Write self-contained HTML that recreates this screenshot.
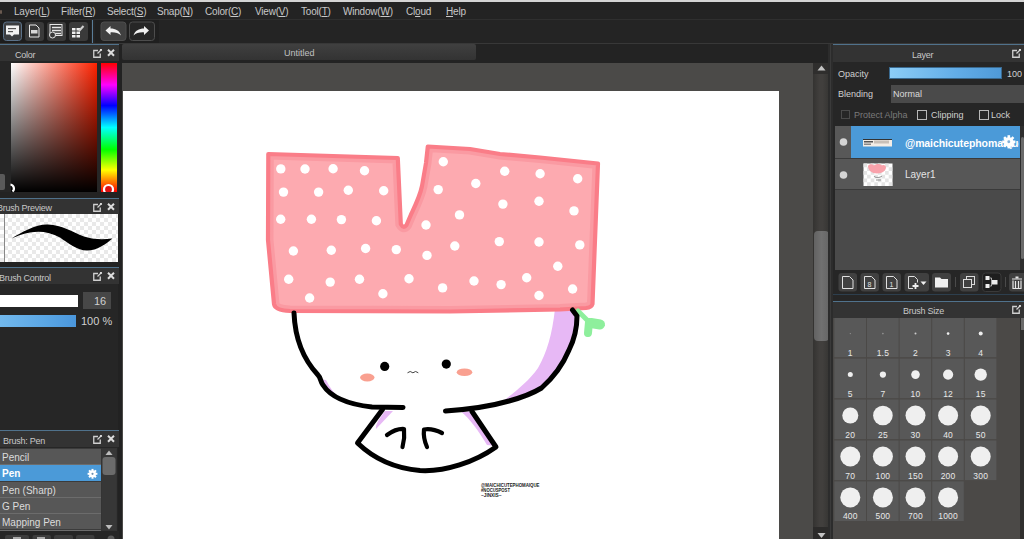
<!DOCTYPE html>
<html><head><meta charset="utf-8">
<style>
*{margin:0;padding:0;box-sizing:border-box}
html,body{width:1024px;height:539px;overflow:hidden;background:#242424;font-family:"Liberation Sans",sans-serif;color:#d6d6d6}
.a{position:absolute}
.t{position:absolute;white-space:nowrap;line-height:1}
/* top */
#topstrip{left:0;top:0;width:1024px;height:2px;background:#d4d4d4}
#menubar{left:0;top:2px;width:1024px;height:17px;background:#232323}
.mi{position:absolute;top:6px;font-size:10px;color:#c8c8c8;letter-spacing:-0.2px}
#toolbar{left:0;top:19px;width:1024px;height:25px;background:#242424;border-top:1px solid #2f2f2f;border-bottom:1px solid #383838}
.tb{position:absolute;top:22px;width:19px;height:19px;background:#3a3a3a;border-radius:3px}
/* canvas */
#tabbar{left:122px;top:44px;width:711px;height:19px;background:#232323}
#tab{left:122px;top:44px;width:354px;height:16px;background:linear-gradient(#404040,#333333);border-radius:2px}
#cv{left:122px;top:63px;width:692px;height:476px;background:#4b4a48}
#paper{left:123px;top:91px;width:656px;height:448px;background:#ffffff}
#vscroll{left:813px;top:63px;width:16px;height:476px;background:linear-gradient(to right,#343331,#413f3d 40%,#413f3d 60%,#363533)}
#thumb{left:813.5px;top:231px;width:15.5px;height:110px;background:linear-gradient(to right,#626262,#717171 50%,#666);border-radius:4px}
/* left panel */
#lp{left:0;top:44px;width:122px;height:495px;background:#262626}
.hdr{position:absolute;height:17px;background:#333333;border-top:1.5px solid #50728c}
.ht{position:absolute;top:5px;font-size:9px;color:#c8c8c8;letter-spacing:-0.25px;white-space:nowrap}
.row{left:0;width:101px;height:15px;background:#575757;font-size:10px;color:#dcdcdc;padding:4px 0 0 2px;line-height:1}
.sel{background:#4b9ad8;color:#fff;font-weight:bold;height:16px}
/* right panel */
#rp{left:831px;top:44px;width:193px;height:495px;background:#262626}
</style></head><body>
<div id="topstrip" class="a"></div>
<div id="menubar" class="a"></div>
<div class="a" style="left:0;top:10px;width:2px;height:4px;background:#6a5a50;border-radius:1px"></div>
<div class="mi" style="left:14px">Layer(<u>L</u>)</div>
<div class="mi" style="left:61px">Filter(<u>R</u>)</div>
<div class="mi" style="left:107px">Select(<u>S</u>)</div>
<div class="mi" style="left:157px">Snap(<u>N</u>)</div>
<div class="mi" style="left:205px">Color(<u>C</u>)</div>
<div class="mi" style="left:255px">View(<u>V</u>)</div>
<div class="mi" style="left:301px">Tool(<u>T</u>)</div>
<div class="mi" style="left:343px">Window(<u>W</u>)</div>
<div class="mi" style="left:406px">Cl<u>o</u>ud</div>
<div class="mi" style="left:446px"><u>H</u>elp</div>
<div id="toolbar" class="a"></div>
<div class="a" style="left:0;top:20px;width:91px;height:23px;background:#1d1d1d"></div>
<div class="a" style="left:92px;top:20px;width:1px;height:23px;background:#5a7d98"></div>
<div class="a" style="left:95px;top:20px;width:64px;height:23px;background:#1f1f1f"></div>
<svg class="a" style="left:0;top:18px" width="160" height="28" viewBox="0 18 160 28">
 <rect x="3.5" y="22" width="18" height="18.5" rx="3" fill="#3b3d40" stroke="#5b7188" stroke-width="1"/>
 <path d="M6,25.5 h13 v9 h-5 l-2,2 l-2,-2 h-4 z" fill="#f2f2f2"/>
 <rect x="8" y="28" width="8" height="1.2" fill="#555"/><rect x="8" y="31" width="5" height="1.2" fill="#555"/>
 <rect x="25" y="22" width="19" height="19" rx="3" fill="#3a3a3a"/>
 <path d="M29.5,25 h6.5 l3,3 v9 h-9.5 z" fill="none" stroke="#e8e8e8" stroke-width="1"/>
 <rect x="31" y="30" width="6.5" height="3.5" fill="#d8d8d8"/>
 <rect x="47" y="22" width="19" height="19" rx="3" fill="#3a3a3a"/>
 <rect x="50" y="24.5" width="12" height="11" fill="none" stroke="#e6e6e6" stroke-width="1"/>
 <path d="M52,27.5h9M52,30.5h9M55,33.5h6" stroke="#e6e6e6" stroke-width="1.3"/>
 <circle cx="52.5" cy="35" r="3" fill="#3a3a3a" stroke="#e6e6e6" stroke-width="1"/>
 <rect x="69" y="22" width="19" height="19" rx="3" fill="#3a3a3a"/>
 <path d="M72,28h3.5v2.5h-3.5zM76.5,28h3.5v2.5h-3.5zM72,31.5h3.5v2.5h-3.5zM76.5,31.5h3.5v2.5h-3.5zM72,35h3.5v2.5h-3.5zM76.5,35h3.5v2.5h-3.5z" fill="#f0f0f0"/>
 <path d="M79,31 l4.5,-5" stroke="#cfcfcf" stroke-width="2"/>
 <rect x="101" y="22" width="25" height="18.5" rx="3" fill="#404040" stroke="#4d4d4d" stroke-width="1"/>
 <path d="M105.5,30.5 l5,-4.5 v2.6 c5,0 9,2 10.5,7 c-2.5,-2.6 -6,-3.4 -10.5,-3.2 v2.6 z" fill="#f0f0f0"/>
 <rect x="129.5" y="22" width="25" height="18.5" rx="3" fill="#262626" stroke="#4d4d4d" stroke-width="1"/>
 <path d="M149,30.5 l-5,-4.5 v2.6 c-5,0 -9,2 -10.5,7 c2.5,-2.6 6,-3.4 10.5,-3.2 v2.6 z" fill="#f0f0f0"/>
</svg>

<div id="tabbar" class="a"></div>
<div id="tab" class="a"></div>
<div class="t" style="left:284px;top:49px;font-size:9px;color:#c0c0c0">Untitled</div>
<div id="cv" class="a"></div>
<div id="paper" class="a"></div>
<svg class="a" style="left:123px;top:91px" width="656" height="448" viewBox="123 91 656 448"><defs><clipPath id="hc"><path d="M268.3,154 L397.8,158 L400.8,224 Q403.5,229 406.5,225 L411,214.5 C416,204 420,196 422,186 L426,163 L427.8,146.5 L470,149 L500,154 L540,157.5 L598,163.5 L592.5,304 Q591.5,307.5 586,308 L560,309.5 L450,311.5 L290,311 Q275,310.5 274,304 L268,240 Z"/></clipPath></defs><path d="M555,309 L573,309 L576,320 C574,338 569,352 558,370 C550,381 542,388 530,393 C520,397 512,400 503,401 C515,392 528,382 538,368 C547,352 552,335 555,309 Z" fill="#e7b8f5"/><path d="M319,379 L326,380 C330,388 334,393 338,397 C330,395 324,390 319,379Z" fill="#e7b8f5"/><path d="M385,411 L393,411 L376,429 C375,425 379,419 385,411Z" fill="#e7b8f5"/><path d="M461,411.5 L472,411.5 L496,446 L487,445 C478,430 470,419 461,411.5Z" fill="#e7b8f5"/><path d="M268.3,154 L397.8,158 L400.8,224 Q403.5,229 406.5,225 L411,214.5 C416,204 420,196 422,186 L426,163 L427.8,146.5 L470,149 L500,154 L540,157.5 L598,163.5 L592.5,304 Q591.5,307.5 586,308 L560,309.5 L450,311.5 L290,311 Q275,310.5 274,304 L268,240 Z" fill="#fdaab0"/><path d="M268.3,154 L397.8,158 L400.8,224 Q403.5,229 406.5,225 L411,214.5 C416,204 420,196 422,186 L426,163 L427.8,146.5 L470,149 L500,154 L540,157.5 L598,163.5 L592.5,304 Q591.5,307.5 586,308 L560,309.5 L450,311.5 L290,311 Q275,310.5 274,304 L268,240 Z" fill="none" stroke="#fa9aa2" stroke-width="11" clip-path="url(#hc)"/><path d="M268.3,154 L397.8,158 L400.8,224 Q403.5,229 406.5,225 L411,214.5 C416,204 420,196 422,186 L426,163 L427.8,146.5 L470,149 L500,154 L540,157.5 L598,163.5 L592.5,304 Q591.5,307.5 586,308 L560,309.5 L450,311.5 L290,311 Q275,310.5 274,304 L268,240 Z" fill="none" stroke="#fa7d88" stroke-width="4.2" stroke-linejoin="round"/><circle cx="280.8" cy="168.9" r="4.7" fill="#fff"/><circle cx="305" cy="169" r="4.7" fill="#fff"/><circle cx="333.1" cy="168.7" r="4.7" fill="#fff"/><circle cx="364.5" cy="170.8" r="4.7" fill="#fff"/><circle cx="443.3" cy="161.8" r="4.7" fill="#fff"/><circle cx="504.7" cy="171.2" r="4.7" fill="#fff"/><circle cx="540.1" cy="173.7" r="4.7" fill="#fff"/><circle cx="577.7" cy="178.8" r="4.7" fill="#fff"/><circle cx="283.5" cy="192.1" r="4.7" fill="#fff"/><circle cx="318.6" cy="192.1" r="4.7" fill="#fff"/><circle cx="348.3" cy="190.3" r="4.7" fill="#fff"/><circle cx="383.7" cy="190.7" r="4.7" fill="#fff"/><circle cx="438.2" cy="189.6" r="4.7" fill="#fff"/><circle cx="475.8" cy="183.5" r="4.7" fill="#fff"/><circle cx="502.9" cy="204.1" r="4.7" fill="#fff"/><circle cx="539" cy="201.2" r="4.7" fill="#fff"/><circle cx="574" cy="210.9" r="4.7" fill="#fff"/><circle cx="280.7" cy="219.2" r="4.7" fill="#fff"/><circle cx="311.4" cy="219.2" r="4.7" fill="#fff"/><circle cx="341.4" cy="219.6" r="4.7" fill="#fff"/><circle cx="376.4" cy="220.7" r="4.7" fill="#fff"/><circle cx="426" cy="225" r="4.7" fill="#fff"/><circle cx="459.5" cy="214.9" r="4.7" fill="#fff"/><circle cx="293.4" cy="251" r="4.7" fill="#fff"/><circle cx="331.3" cy="250.3" r="4.7" fill="#fff"/><circle cx="365.6" cy="248.5" r="4.7" fill="#fff"/><circle cx="396.3" cy="249.6" r="4.7" fill="#fff"/><circle cx="427" cy="255.4" r="4.7" fill="#fff"/><circle cx="454.8" cy="246" r="4.7" fill="#fff"/><circle cx="499.3" cy="241.6" r="4.7" fill="#fff"/><circle cx="539" cy="242" r="4.7" fill="#fff"/><circle cx="579.8" cy="244.9" r="4.7" fill="#fff"/><circle cx="288.7" cy="279.2" r="4.7" fill="#fff"/><circle cx="330.2" cy="282.1" r="4.7" fill="#fff"/><circle cx="359.5" cy="279.2" r="4.7" fill="#fff"/><circle cx="409" cy="278.8" r="4.7" fill="#fff"/><circle cx="442.6" cy="287.9" r="4.7" fill="#fff"/><circle cx="474" cy="281" r="4.7" fill="#fff"/><circle cx="501.1" cy="284.6" r="4.7" fill="#fff"/><circle cx="526.7" cy="277.8" r="4.7" fill="#fff"/><circle cx="557.8" cy="266.2" r="4.7" fill="#fff"/><circle cx="572.6" cy="289" r="4.7" fill="#fff"/><circle cx="309.6" cy="298" r="4.7" fill="#fff"/><circle cx="382.9" cy="293.7" r="4.7" fill="#fff"/><circle cx="539" cy="295.5" r="4.7" fill="#fff"/><g stroke="#8eef9c" stroke-linecap="round" fill="none"><path d="M578,311 L588,321" stroke-width="5"/><path d="M589,322 L588,333" stroke-width="8"/><path d="M591,323 L600,324.5" stroke-width="10"/></g><g stroke="#000" stroke-width="5" fill="none" stroke-linecap="round" stroke-linejoin="round"><path d="M294,313 C295,338 304,360 318,375 C321,378 320,381 323,385 C330,396 345,404 372,407 L403,407.5"/><path d="M572.5,310 L577,316 C577,330 574,340 569,350 C564,362 555,376 541.5,388 C530,395 520,398 509,401 C495,405 475,409 445.5,411"/><path d="M382.5,409.5 L357.5,443 C370,455 390,468 420,470.5 C445,472 475,462 496,447 L472,411.5"/><path d="M387,435 Q396,428.5 404,429 Q405,438 402.5,447" stroke-width="4.2"/><path d="M442,433 Q432,428 424,429.5 Q423,438 427,447" stroke-width="4.2"/></g><circle cx="384.7" cy="366.4" r="4.6" fill="#000"/><circle cx="446.3" cy="364.1" r="4.6" fill="#000"/><ellipse cx="367.3" cy="377.5" rx="7.2" ry="4" fill="#f9a090"/><ellipse cx="464.5" cy="372.3" rx="7.8" ry="3.8" fill="#f9a090"/><path d="M407.5,372.8 q2.7,-2.6 5.4,0 q2.7,-2.6 5.4,0" stroke="#444" stroke-width="1" fill="none"/><g font-family="Liberation Sans" font-weight="bold" font-size="5" fill="#222"><text x="481" y="486.5" textLength="58.5" lengthAdjust="spacingAndGlyphs">@MAICHICUTEPHOMAIQUE</text><text x="481" y="491.5" textLength="29" lengthAdjust="spacingAndGlyphs">#NOCUSPOST</text><text x="481" y="496.5" textLength="20.5" lengthAdjust="spacingAndGlyphs">~JINXIS~</text></g></svg>
<div id="vscroll" class="a"></div>
<div id="thumb" class="a"></div>
<svg class="a" style="left:813px;top:63px" width="16" height="476" viewBox="813 63 16 476"><rect x="813" y="63" width="16" height="11" fill="#2f2e2d"/><path d="M817.5,70.5 l4,-5 l4,5z" fill="#c4c4c4"/><rect x="813" y="527" width="16" height="12" fill="#2c2b2a"/><path d="M817.5,533 l4,5 l4,-5z" fill="#c4c4c4"/></svg>


<div id="lp" class="a"></div>
<div class="a" style="left:118px;top:44px;width:4px;height:495px;background:#222222"></div>
<!-- color panel -->
<div class="hdr" style="left:0;top:44px;width:119px"></div>
<div class="ht" style="left:15px;top:50px">Color</div>
<div class="a" style="left:11px;top:63px;width:86px;height:129px;background:linear-gradient(to bottom,rgba(0,0,0,0),#000),linear-gradient(to right,#fff,#ff2200)"></div>
<div class="a" style="left:101px;top:63px;width:16px;height:129px;background:linear-gradient(to bottom,#ff0000 0%,#ff00ff 17%,#0000ff 33%,#00ffff 50%,#00ff00 67%,#ffff00 83%,#ff0000 100%)"></div>
<div class="a" style="left:0;top:192px;width:119px;height:6px;background:#232323"></div>
<!-- brush preview -->
<div class="hdr" style="left:0;top:198px;width:119px;height:16px"></div>
<div class="ht" style="left:-3px;top:203px">Brush Preview</div>
<div class="a" style="left:0;top:214px;width:118px;height:48px;background-color:#fff;background-image:linear-gradient(45deg,#e9e9e9 25%,transparent 25%,transparent 75%,#e9e9e9 75%),linear-gradient(45deg,#e9e9e9 25%,transparent 25%,transparent 75%,#e9e9e9 75%);background-size:8px 8px;background-position:0 0,4px 4px"></div>
<div class="a" style="left:4px;top:214px;width:1px;height:48px;background:#888"></div>
<div class="a" style="left:0;top:262px;width:119px;height:5px;background:#232323"></div>
<!-- brush control -->
<div class="hdr" style="left:0;top:267px;width:119px"></div>
<div class="ht" style="left:-1px;top:273px">Brush Control</div>
<div class="a" style="left:0;top:295px;width:78px;height:12px;background:#fff"></div>
<div class="a" style="left:83px;top:292px;width:28px;height:17px;background:#474747"></div>
<div class="t" style="left:94px;top:296px;font-size:11px;color:#d0d0d0">16</div>
<div class="a" style="left:0;top:315px;width:76px;height:12px;background:linear-gradient(to right,#72b8ec,#5aa6e4 60%,#4a96dc)"></div>
<div class="t" style="left:81px;top:316px;font-size:11px;color:#d0d0d0">100 %</div>
<!-- brush list -->
<div class="hdr" style="left:0;top:430px;width:119px"></div>
<div class="ht" style="left:3px;top:436px">Brush: Pen</div>
<div class="a" style="left:0;top:448px;width:101px;height:83px;background:#3b3b3b"></div>
<div class="a row" style="top:449px">Pencil</div>
<div class="a row sel" style="top:465px">Pen</div>
<div class="a row" style="top:482px">Pen (Sharp)</div>
<div class="a row" style="top:498px">G Pen</div>
<div class="a row" style="top:514px">Mapping Pen</div>
<div class="a" style="left:101px;top:448px;width:16px;height:83px;background:#343434"></div>
<svg class="a" style="left:93px;top:49px" width="24" height="10" viewBox="0 0 24 10"><path d="M5,1.5 H0.75 V8.25 H7.25 V4.5" fill="none" stroke="#d0d0d0" stroke-width="1.3"/><path d="M4.5,4.5 L8,1" stroke="#d0d0d0" stroke-width="1.3"/><circle cx="8" cy="1" r="1.1" fill="#e0e0e0"/><path d="M15,0.8 L21,6.8 M21,0.8 L15,6.8" stroke="#dcdcdc" stroke-width="2"/></svg><svg class="a" style="left:93px;top:203px" width="24" height="10" viewBox="0 0 24 10"><path d="M5,1.5 H0.75 V8.25 H7.25 V4.5" fill="none" stroke="#d0d0d0" stroke-width="1.3"/><path d="M4.5,4.5 L8,1" stroke="#d0d0d0" stroke-width="1.3"/><circle cx="8" cy="1" r="1.1" fill="#e0e0e0"/><path d="M15,0.8 L21,6.8 M21,0.8 L15,6.8" stroke="#dcdcdc" stroke-width="2"/></svg><svg class="a" style="left:93px;top:272px" width="24" height="10" viewBox="0 0 24 10"><path d="M5,1.5 H0.75 V8.25 H7.25 V4.5" fill="none" stroke="#d0d0d0" stroke-width="1.3"/><path d="M4.5,4.5 L8,1" stroke="#d0d0d0" stroke-width="1.3"/><circle cx="8" cy="1" r="1.1" fill="#e0e0e0"/><path d="M15,0.8 L21,6.8 M21,0.8 L15,6.8" stroke="#dcdcdc" stroke-width="2"/></svg><svg class="a" style="left:93px;top:435px" width="24" height="10" viewBox="0 0 24 10"><path d="M5,1.5 H0.75 V8.25 H7.25 V4.5" fill="none" stroke="#d0d0d0" stroke-width="1.3"/><path d="M4.5,4.5 L8,1" stroke="#d0d0d0" stroke-width="1.3"/><circle cx="8" cy="1" r="1.1" fill="#e0e0e0"/><path d="M15,0.8 L21,6.8 M21,0.8 L15,6.8" stroke="#dcdcdc" stroke-width="2"/></svg>
<svg class="a" style="left:0;top:214px" width="118" height="48" viewBox="0 214 118 48">
<path d="M11.5,238.5 C22,232 36,224 48,224.5 C62,225 72,232 84,236.5 C95,240 104,239.5 112.5,238.5 C106,244 97,250.5 87,250.5 C77,250.5 68,243 60,237.5 C50,232 40,230.5 30,232.5 C22,234 16,236.5 11.5,238.5 Z" fill="#000"/>
</svg>
<svg class="a" style="left:0;top:172px" width="120" height="22" viewBox="0 172 120 22">
<rect x="-2" y="174" width="7" height="16" rx="2" fill="#5a5a5a"/>
<path d="M10.5,184.5 a4,4 0 0 1 2,7" fill="none" stroke="#fff" stroke-width="2.2"/>
<clipPath id="hb"><rect x="100" y="172" width="20" height="20"/></clipPath><circle cx="108.5" cy="189.5" r="4.5" fill="#e01010" stroke="#fff" stroke-width="2.2" clip-path="url(#hb)"/>
</svg>

<svg class="a" style="left:0;top:448px" width="122" height="91" viewBox="0 448 122 91">
<path d="M0,464.5h101M0,497.5h101M0,513.5h101M0,530.5h101" stroke="#6c6c6c" stroke-width="1"/>
<rect x="102" y="449" width="14" height="81" fill="#373737"/>
<path d="M105.5,455 l3.5,-4.5 l3.5,4.5z" fill="#bdbdbd"/>
<rect x="102.5" y="457" width="13" height="18" rx="3" fill="#6b6b6b"/>
<path d="M105.5,525 l3.5,4.5 l3.5,-4.5z" fill="#bdbdbd"/>
<rect x="0" y="531" width="119" height="8" fill="#262626"/>
<rect x="5" y="535" width="24" height="8" rx="2" fill="#3d3d3d"/>
<rect x="32.5" y="535" width="18.5" height="8" rx="2" fill="#3d3d3d"/>
<rect x="54" y="535" width="19" height="8" rx="2" fill="#3d3d3d"/>
<rect x="76" y="535" width="18.5" height="8" rx="2" fill="#3d3d3d"/>
<rect x="13" y="537" width="8" height="2" fill="#aaa"/>
<rect x="37" y="537" width="8" height="2" fill="#aaa"/>
<circle cx="111" cy="539" r="3.5" fill="#5a5a5a"/>
<g fill="#fff"><circle cx="92.5" cy="473.8" r="3.43"/><rect x="91.50" y="468.90" width="2.0" height="9.80" transform="rotate(0 92.5 473.8)"/><rect x="91.50" y="468.90" width="2.0" height="9.80" transform="rotate(45 92.5 473.8)"/><rect x="91.50" y="468.90" width="2.0" height="9.80" transform="rotate(90 92.5 473.8)"/><rect x="91.50" y="468.90" width="2.0" height="9.80" transform="rotate(135 92.5 473.8)"/><circle cx="92.5" cy="473.8" r="1.08" fill="#6a8fb0"/></g>
</svg>
<div id="rp" class="a"></div>
<div class="a" style="left:828px;top:44px;width:5px;height:495px;background:#2c2c2c"></div>
<div class="a" style="left:830px;top:44px;width:1px;height:495px;background:#3a3a3a"></div>
<div class="hdr" style="left:833px;top:44px;width:191px;height:18px"></div>
<div class="ht" style="left:912px;top:50px">Layer</div>
<div class="t" style="left:838px;top:70px;font-size:9px;color:#d0d0d0">Opacity</div>
<div class="a" style="left:889px;top:67px;width:113px;height:12px;background:linear-gradient(to right,#8ccdf6,#62ade8 60%,#4f9ad8);border:1px solid #3a6a90"></div>
<div class="t" style="left:1007px;top:70px;font-size:9px;color:#d0d0d0">100</div>
<div class="t" style="left:838px;top:90px;font-size:9px;color:#d0d0d0">Blending</div>
<div class="a" style="left:891px;top:85px;width:133px;height:18px;background:#4a4a4a"></div>
<div class="t" style="left:893px;top:90px;font-size:9px;color:#dadada">Normal</div>
<div class="a" style="left:841px;top:110px;width:9px;height:9px;border:1px solid #4a4a4a"></div>
<div class="t" style="left:854px;top:111px;font-size:9px;color:#7a7a7a">Protect Alpha</div>
<div class="a" style="left:917px;top:110px;width:10px;height:10px;border:1px solid #b8b8b8"></div>
<div class="t" style="left:931px;top:111px;font-size:9px;color:#d0d0d0">Clipping</div>
<div class="a" style="left:979px;top:110px;width:10px;height:10px;border:1px solid #b8b8b8"></div>
<div class="t" style="left:991px;top:111px;font-size:9px;color:#d0d0d0">Lock</div>
<!-- layer list -->
<div class="a" style="left:835px;top:126px;width:185px;height:144px;background:#4a4a4a"></div>
<div class="a" style="left:835px;top:126px;width:185px;height:32px;background:#585858"></div>
<div class="a" style="left:851px;top:126px;width:169px;height:32px;background:#4b9ad8"></div>
<div class="a" style="left:835px;top:158px;width:185px;height:1px;background:#3a3a3a"></div>
<div class="a" style="left:835px;top:159px;width:185px;height:30px;background:#575757"></div>
<div class="a" style="left:835px;top:189px;width:185px;height:1px;background:#3a3a3a"></div>
<div class="a" style="left:1020px;top:126px;width:4px;height:144px;background:#2e2e2e"></div>
<div class="a" style="left:1021px;top:137px;width:3px;height:122px;background:#6a6a6a;border-radius:2px"></div>
<svg class="a" style="left:835px;top:126px" width="185" height="64" viewBox="835 126 185 64">
<circle cx="843.5" cy="142" r="3.8" fill="#d4d4d4"/>
<circle cx="843.5" cy="175" r="3.8" fill="#d4d4d4"/>
<rect x="863" y="139" width="29" height="7.5" fill="#f3ede6"/><rect x="863" y="139" width="29" height="1" fill="#333"/><rect x="864" y="141" width="9" height="1.5" fill="#555"/><rect x="874" y="140.5" width="15" height="3" fill="#c8c0b8"/><rect x="864" y="143.5" width="7" height="1.5" fill="#888"/>
<rect x="863.5" y="163.5" width="29" height="22.5" fill="#fff"/><rect x="863.5" y="163.50" width="3.6" height="3.75" fill="#e4e4e4"/><rect x="863.5" y="171.00" width="3.6" height="3.75" fill="#e4e4e4"/><rect x="863.5" y="178.50" width="3.6" height="3.75" fill="#e4e4e4"/><rect x="867.1" y="167.25" width="3.6" height="3.75" fill="#e4e4e4"/><rect x="867.1" y="174.75" width="3.6" height="3.75" fill="#e4e4e4"/><rect x="867.1" y="182.25" width="3.6" height="3.75" fill="#e4e4e4"/><rect x="870.7" y="163.50" width="3.6" height="3.75" fill="#e4e4e4"/><rect x="870.7" y="171.00" width="3.6" height="3.75" fill="#e4e4e4"/><rect x="870.7" y="178.50" width="3.6" height="3.75" fill="#e4e4e4"/><rect x="874.3" y="167.25" width="3.6" height="3.75" fill="#e4e4e4"/><rect x="874.3" y="174.75" width="3.6" height="3.75" fill="#e4e4e4"/><rect x="874.3" y="182.25" width="3.6" height="3.75" fill="#e4e4e4"/><rect x="877.9" y="163.50" width="3.6" height="3.75" fill="#e4e4e4"/><rect x="877.9" y="171.00" width="3.6" height="3.75" fill="#e4e4e4"/><rect x="877.9" y="178.50" width="3.6" height="3.75" fill="#e4e4e4"/><rect x="881.5" y="167.25" width="3.6" height="3.75" fill="#e4e4e4"/><rect x="881.5" y="174.75" width="3.6" height="3.75" fill="#e4e4e4"/><rect x="881.5" y="182.25" width="3.6" height="3.75" fill="#e4e4e4"/><rect x="885.1" y="163.50" width="3.6" height="3.75" fill="#e4e4e4"/><rect x="885.1" y="171.00" width="3.6" height="3.75" fill="#e4e4e4"/><rect x="885.1" y="178.50" width="3.6" height="3.75" fill="#e4e4e4"/><rect x="888.7" y="167.25" width="3.6" height="3.75" fill="#e4e4e4"/><rect x="888.7" y="174.75" width="3.6" height="3.75" fill="#e4e4e4"/><rect x="888.7" y="182.25" width="3.6" height="3.75" fill="#e4e4e4"/><path d="M868,166 c1,-2 4,-2.5 6,-0.5 c2,-2 6,-2 8,0 c2,-1 4,0 4,2 c0,3 -4,6 -9,6 c-5,0 -9,-3 -9,-7.5z" fill="#f9a2ab"/><path d="M874,176 c1,2 6,2 8,0 M876,180 h5" stroke="#777" stroke-width="0.8" fill="none"/></svg>
<div class="t" style="left:905px;top:138px;font-size:10.5px;font-weight:bold;color:#fff;letter-spacing:-0.1px;width:114px;overflow:hidden">@maichicutephomaique</div>
<svg class="a" style="left:999px;top:132px" width="20" height="20" viewBox="999 132 20 20"><g fill="#fff"><circle cx="1008.8" cy="141.8" r="4.62"/><rect x="1007.50" y="135.20" width="2.6" height="13.20" transform="rotate(0 1008.8 141.8)"/><rect x="1007.50" y="135.20" width="2.6" height="13.20" transform="rotate(45 1008.8 141.8)"/><rect x="1007.50" y="135.20" width="2.6" height="13.20" transform="rotate(90 1008.8 141.8)"/><rect x="1007.50" y="135.20" width="2.6" height="13.20" transform="rotate(135 1008.8 141.8)"/><circle cx="1008.8" cy="141.8" r="1.45" fill="#7fb0da"/></g></svg>
<div class="t" style="left:905px;top:170px;font-size:10px;color:#e4e4e4">Layer1</div>
<svg class="a" style="left:833px;top:270px" width="191" height="48" viewBox="833 270 191 48"><rect x="833" y="270" width="191" height="24" fill="#262626"/><rect x="833" y="294" width="191" height="1" fill="#2d3f4e"/><rect x="833" y="295" width="191" height="6" fill="#262626"/><rect x="838.5" y="273" width="18.5" height="18.5" rx="3" fill="#404040"/><rect x="860.5" y="273" width="18.5" height="18.5" rx="3" fill="#404040"/><rect x="882.5" y="273" width="18.5" height="18.5" rx="3" fill="#404040"/><rect x="904.5" y="273" width="24.5" height="18.5" rx="3" fill="#404040"/><path d="M842.5,276.5 h7 l3.5,3.5 v8.5 h-10.5 z" fill="none" stroke="#e0e0e0" stroke-width="1"/><path d="M864.5,276.5 h7 l3.5,3.5 v8.5 h-10.5 z" fill="none" stroke="#e0e0e0" stroke-width="1"/><text x="869.5" y="287" font-size="7" fill="#e0e0e0" text-anchor="middle" font-family="Liberation Sans">8</text><path d="M886.5,276.5 h7 l3.5,3.5 v8.5 h-10.5 z" fill="none" stroke="#e0e0e0" stroke-width="1"/><text x="891.5" y="287" font-size="7" fill="#e0e0e0" text-anchor="middle" font-family="Liberation Sans">1</text><path d="M908.5,276.5 h6 l3,3 v3 M913,288.5 h-4.5 v-12" fill="none" stroke="#e0e0e0" stroke-width="1"/><path d="M915.5,283v6M912.5,286h6" stroke="#f0f0f0" stroke-width="1.8"/><path d="M920.5,281.5h6l-3,3.5z" fill="#f0f0f0"/><rect x="932" y="273" width="19" height="18.5" rx="3" fill="#404040"/><path d="M935,277.5h5l1.5,1.5h6.5v8.5h-13z" fill="#f0f0f0"/><rect x="955" y="277" width="1" height="10" fill="#4a4a4a"/><rect x="960" y="273" width="18.5" height="18.5" rx="3" fill="#404040"/><rect x="966.5" y="276.5" width="8" height="8" fill="none" stroke="#dcdcdc"/><rect x="963.5" y="279.5" width="8" height="8" fill="#404040" stroke="#dcdcdc"/><rect x="982.5" y="273" width="18.5" height="18.5" rx="3" fill="#1e1e1e" stroke="#3a3a3a"/><rect x="985.5" y="276" width="4" height="4" fill="#eee"/><rect x="985.5" y="284" width="4" height="4" fill="#eee"/><rect x="992" y="280" width="5.5" height="4.5" fill="#eee"/><path d="M989.5,278h2v8h-2" fill="none" stroke="#ccc" stroke-width="0.8"/><rect x="1005" y="277" width="1" height="10" fill="#4a4a4a"/><rect x="1009" y="273" width="19" height="18.5" rx="3" fill="#404040"/><path d="M1012,279h10M1013,280.5v8h8v-8M1015.5,281v7M1018.5,281v7" fill="none" stroke="#e6e6e6" stroke-width="1.2"/><rect x="1015.5" y="276.5" width="3" height="2" fill="#e6e6e6"/></svg><div class="hdr" style="left:833px;top:301px;width:191px;height:17px"></div><div class="ht" style="left:903px;top:306px">Brush Size</div><svg class="a" style="left:1012px;top:305px" width="10" height="10" viewBox="0 0 10 10"><path d="M5,1.5 H0.75 V8.25 H7.25 V4.5" fill="none" stroke="#d0d0d0" stroke-width="1.3"/><path d="M4.5,4.5 L8,1" stroke="#d0d0d0" stroke-width="1.3"/><circle cx="8" cy="1" r="1.1" fill="#e0e0e0"/></svg><svg class="a" style="left:1012px;top:49px" width="10" height="10" viewBox="0 0 10 10"><path d="M5,1.5 H0.75 V8.25 H7.25 V4.5" fill="none" stroke="#d0d0d0" stroke-width="1.3"/><path d="M4.5,4.5 L8,1" stroke="#d0d0d0" stroke-width="1.3"/><circle cx="8" cy="1" r="1.1" fill="#e0e0e0"/></svg><svg class="a" style="left:833px;top:318px" width="191" height="221" viewBox="833 318 191 221"><rect x="833" y="318" width="191" height="221" fill="#4b4947"/><rect x="1020" y="318" width="4" height="221" fill="#302f2e"/><rect x="1021" y="318" width="3" height="12" fill="#6a6a6a"/><rect x="834.4" y="317.6" width="31.6" height="39.6" fill="#585858"/><circle cx="850.3" cy="333.6" r="0.6" fill="#999"/><text x="850.3" y="355.6" font-size="8.5" fill="#e8e8e8" text-anchor="middle" font-family="Liberation Sans" letter-spacing="0.2">1</text><rect x="867.0" y="317.6" width="31.6" height="39.6" fill="#585858"/><circle cx="882.9" cy="333.6" r="0.8" fill="#999"/><text x="882.9" y="355.6" font-size="8.5" fill="#e8e8e8" text-anchor="middle" font-family="Liberation Sans" letter-spacing="0.2">1.5</text><rect x="899.6" y="317.6" width="31.6" height="39.6" fill="#585858"/><circle cx="915.5" cy="333.6" r="1.0" fill="#ccc"/><text x="915.5" y="355.6" font-size="8.5" fill="#e8e8e8" text-anchor="middle" font-family="Liberation Sans" letter-spacing="0.2">2</text><rect x="932.2" y="317.6" width="31.6" height="39.6" fill="#585858"/><circle cx="948.1" cy="333.6" r="1.3" fill="#efefef"/><text x="948.1" y="355.6" font-size="8.5" fill="#e8e8e8" text-anchor="middle" font-family="Liberation Sans" letter-spacing="0.2">3</text><rect x="964.8" y="317.6" width="31.6" height="39.6" fill="#585858"/><circle cx="980.7" cy="333.6" r="2.0" fill="#efefef"/><text x="980.7" y="355.6" font-size="8.5" fill="#e8e8e8" text-anchor="middle" font-family="Liberation Sans" letter-spacing="0.2">4</text><rect x="834.4" y="358.6" width="31.6" height="39.6" fill="#585858"/><circle cx="850.3" cy="374.6" r="2.5" fill="#efefef"/><text x="850.3" y="396.6" font-size="8.5" fill="#e8e8e8" text-anchor="middle" font-family="Liberation Sans" letter-spacing="0.2">5</text><rect x="867.0" y="358.6" width="31.6" height="39.6" fill="#585858"/><circle cx="882.9" cy="374.6" r="3.1" fill="#efefef"/><text x="882.9" y="396.6" font-size="8.5" fill="#e8e8e8" text-anchor="middle" font-family="Liberation Sans" letter-spacing="0.2">7</text><rect x="899.6" y="358.6" width="31.6" height="39.6" fill="#585858"/><circle cx="915.5" cy="374.6" r="4.3" fill="#efefef"/><text x="915.5" y="396.6" font-size="8.5" fill="#e8e8e8" text-anchor="middle" font-family="Liberation Sans" letter-spacing="0.2">10</text><rect x="932.2" y="358.6" width="31.6" height="39.6" fill="#585858"/><circle cx="948.1" cy="374.6" r="5.1" fill="#efefef"/><text x="948.1" y="396.6" font-size="8.5" fill="#e8e8e8" text-anchor="middle" font-family="Liberation Sans" letter-spacing="0.2">12</text><rect x="964.8" y="358.6" width="31.6" height="39.6" fill="#585858"/><circle cx="980.7" cy="374.6" r="6.2" fill="#efefef"/><text x="980.7" y="396.6" font-size="8.5" fill="#e8e8e8" text-anchor="middle" font-family="Liberation Sans" letter-spacing="0.2">15</text><rect x="834.4" y="399.5" width="31.6" height="39.6" fill="#585858"/><circle cx="850.3" cy="415.5" r="8" fill="#efefef"/><text x="850.3" y="437.5" font-size="8.5" fill="#e8e8e8" text-anchor="middle" font-family="Liberation Sans" letter-spacing="0.2">20</text><rect x="867.0" y="399.5" width="31.6" height="39.6" fill="#585858"/><circle cx="882.9" cy="415.5" r="9.8" fill="#efefef"/><text x="882.9" y="437.5" font-size="8.5" fill="#e8e8e8" text-anchor="middle" font-family="Liberation Sans" letter-spacing="0.2">25</text><rect x="899.6" y="399.5" width="31.6" height="39.6" fill="#585858"/><circle cx="915.5" cy="415.5" r="10" fill="#efefef"/><text x="915.5" y="437.5" font-size="8.5" fill="#e8e8e8" text-anchor="middle" font-family="Liberation Sans" letter-spacing="0.2">30</text><rect x="932.2" y="399.5" width="31.6" height="39.6" fill="#585858"/><circle cx="948.1" cy="415.5" r="10" fill="#efefef"/><text x="948.1" y="437.5" font-size="8.5" fill="#e8e8e8" text-anchor="middle" font-family="Liberation Sans" letter-spacing="0.2">40</text><rect x="964.8" y="399.5" width="31.6" height="39.6" fill="#585858"/><circle cx="980.7" cy="415.5" r="10" fill="#efefef"/><text x="980.7" y="437.5" font-size="8.5" fill="#e8e8e8" text-anchor="middle" font-family="Liberation Sans" letter-spacing="0.2">50</text><rect x="834.4" y="440.5" width="31.6" height="39.6" fill="#585858"/><circle cx="850.3" cy="456.5" r="10" fill="#efefef"/><text x="850.3" y="478.5" font-size="8.5" fill="#e8e8e8" text-anchor="middle" font-family="Liberation Sans" letter-spacing="0.2">70</text><rect x="867.0" y="440.5" width="31.6" height="39.6" fill="#585858"/><circle cx="882.9" cy="456.5" r="10" fill="#efefef"/><text x="882.9" y="478.5" font-size="8.5" fill="#e8e8e8" text-anchor="middle" font-family="Liberation Sans" letter-spacing="0.2">100</text><rect x="899.6" y="440.5" width="31.6" height="39.6" fill="#585858"/><circle cx="915.5" cy="456.5" r="10" fill="#efefef"/><text x="915.5" y="478.5" font-size="8.5" fill="#e8e8e8" text-anchor="middle" font-family="Liberation Sans" letter-spacing="0.2">150</text><rect x="932.2" y="440.5" width="31.6" height="39.6" fill="#585858"/><circle cx="948.1" cy="456.5" r="10" fill="#efefef"/><text x="948.1" y="478.5" font-size="8.5" fill="#e8e8e8" text-anchor="middle" font-family="Liberation Sans" letter-spacing="0.2">200</text><rect x="964.8" y="440.5" width="31.6" height="39.6" fill="#585858"/><circle cx="980.7" cy="456.5" r="10" fill="#efefef"/><text x="980.7" y="478.5" font-size="8.5" fill="#e8e8e8" text-anchor="middle" font-family="Liberation Sans" letter-spacing="0.2">300</text><rect x="834.4" y="481.4" width="31.6" height="39.6" fill="#585858"/><circle cx="850.3" cy="497.4" r="10" fill="#efefef"/><text x="850.3" y="519.4" font-size="8.5" fill="#e8e8e8" text-anchor="middle" font-family="Liberation Sans" letter-spacing="0.2">400</text><rect x="867.0" y="481.4" width="31.6" height="39.6" fill="#585858"/><circle cx="882.9" cy="497.4" r="10" fill="#efefef"/><text x="882.9" y="519.4" font-size="8.5" fill="#e8e8e8" text-anchor="middle" font-family="Liberation Sans" letter-spacing="0.2">500</text><rect x="899.6" y="481.4" width="31.6" height="39.6" fill="#585858"/><circle cx="915.5" cy="497.4" r="10" fill="#efefef"/><text x="915.5" y="519.4" font-size="8.5" fill="#e8e8e8" text-anchor="middle" font-family="Liberation Sans" letter-spacing="0.2">700</text><rect x="932.2" y="481.4" width="31.6" height="39.6" fill="#585858"/><circle cx="948.1" cy="497.4" r="10" fill="#efefef"/><text x="948.1" y="519.4" font-size="8.5" fill="#e8e8e8" text-anchor="middle" font-family="Liberation Sans" letter-spacing="0.2">1000</text></svg>
</body></html>
